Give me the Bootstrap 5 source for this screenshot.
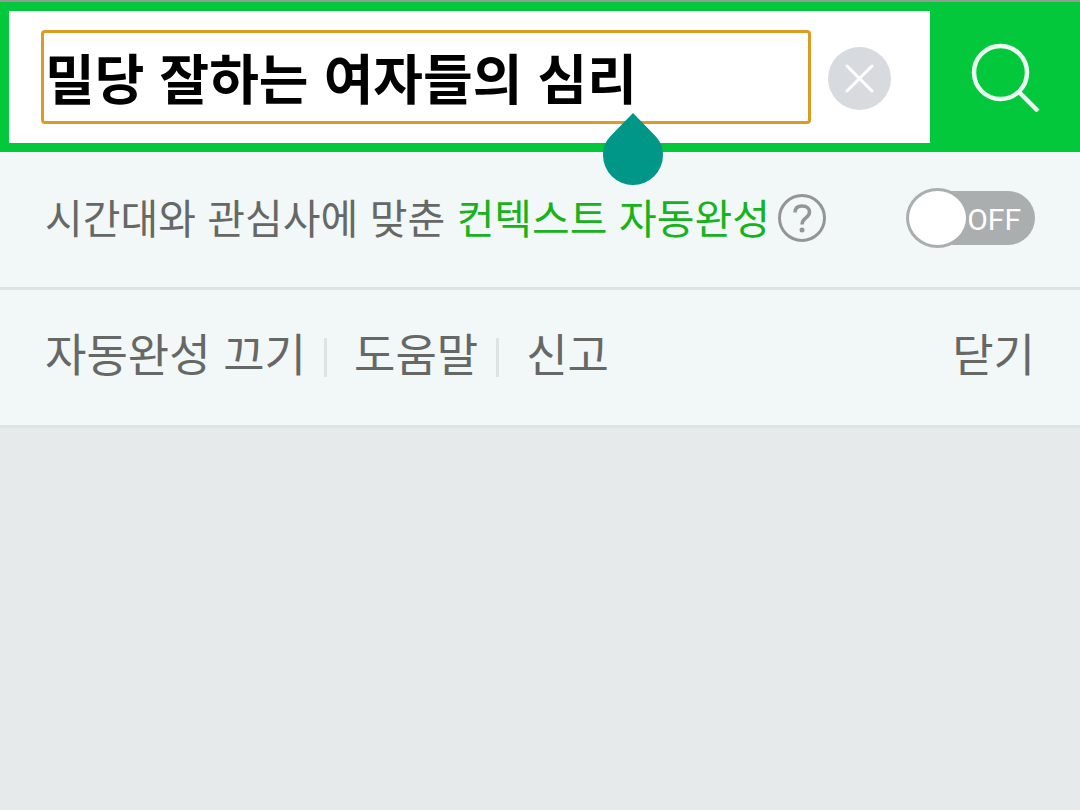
<!DOCTYPE html>
<html lang="ko">
<head>
<meta charset="utf-8">
<meta name="viewport" content="width=device-width, initial-scale=1">
<title>검색</title>
<link href="https://cdn.jsdelivr.net/npm/bootstrap@5.3.0/dist/css/bootstrap.min.css" rel="stylesheet">
<style>
  body { background: #e6eaea; color: #666866; font-family: "Noto Sans CJK KR", sans-serif; }
  .search-bar { background: #03c83c; border-top: 2px solid #949a94; }
  .search-form { padding: 9px 0 9px 9px; }
  .query-box { height: 132px; padding-left: 32px; padding-right: 39px; gap: 17px; }
  .query-input { height: 94px; padding: 0 0 2px 1px; border: 3px solid #dc9b22; border-radius: 4px; color: #000; font-size: 54px; font-weight: 700; line-height: 80px; outline: 0; }
  .caret-handle { left: 562px; top: 82px; pointer-events: none; }
  .clear-button { padding: 3px 0 0; }
  .search-button { width: 150px; }
  .panel-row { background: #f2f7f7; border-bottom: 3px solid #dfe3e4; min-height: 138px; padding: 0 45px 4px; }
  .context-text { font-size: 41px; line-height: 60px; padding-bottom: 4px; color: #666866; }
  .context-name { color: #16b31c; }
  .menu-link { font-size: 45px; line-height: 66px; padding-bottom: 6px; color: #666866; text-decoration: none; }
  .menu-divider { width: 3px; height: 39px; margin: 4px 27px 0 18px; background: #dfe3e4; }
  .toggle { width: 129px; height: 60px; }
  .toggle-input { appearance: none; width: 63px; height: 60px; margin: 0; border: 3px solid #abaeae; border-radius: 50%; background: #fff; z-index: 1; }
  .toggle-track { left: 20px; right: 0; top: 3px; bottom: 3px; border-radius: 27px; background: #abaeae; }
  .toggle-text { right: 14px; top: 15px; color: #fff; font: 30px/34px Roboto, sans-serif; }
</style>
</head>
<body>
<header class="search-bar">
  <form class="search-form d-flex">
    <div class="query-box d-flex align-items-center flex-grow-1 bg-white">
      <div class="position-relative flex-grow-1">
        <input class="query-input d-block w-100" type="text" aria-label="검색어" value="밀당 잘하는 여자들의 심리">
        <svg class="caret-handle position-absolute" width="60" height="74" viewBox="0 0 60 74" aria-hidden="true"><path fill="#009688" d="M30 1 8.800 22.800C3 28.500 0 35 0 43a30 30 0 0 0 60 0c0-8-3-14.500-8.800-20.200Z"/></svg>
      </div>
      <button class="clear-button border-0 bg-transparent flex-shrink-0" type="reset" aria-label="지우기">
        <svg class="d-block" width="63" height="63" viewBox="0 0 63 63" fill="none"><circle cx="31.500" cy="31.500" r="31.500" fill="#d7dade"/><path d="m19 19 25 25M44 19 19 44" stroke="#fff" stroke-width="3" stroke-linecap="round"/></svg>
      </button>
    </div>
    <button class="search-button border-0 bg-transparent p-0 flex-shrink-0" type="submit" aria-label="검색">
      <svg class="d-block mx-auto" width="70" height="70" viewBox="0 0 70 70" fill="none" stroke="#ecfff0" stroke-width="4.500"><circle cx="30.500" cy="30.500" r="26.500"/><path d="m49 50 19 19"/></svg>
    </button>
  </form>
</header>
<main>
  <section class="panel-row d-flex align-items-center justify-content-between">
    <div class="d-flex align-items-center gap-2">
      <label class="context-text text-nowrap" for="context">시간대와 관심사에 맞춘 <span class="context-name">컨텍스트 자동완성</span></label>
      <button class="border-0 bg-transparent p-0" type="button" aria-label="도움말">
        <svg class="d-block" width="48" height="48" viewBox="0 0 48 48" fill="none" stroke="#949696" stroke-width="3"><circle cx="24" cy="24" r="22.500"/><path d="M17 18.500c0-4.500 3-6.500 7.200-6.500 4.300 0 7.300 2.200 7.300 6 0 6.300-7.500 5.500-7.500 12.500" stroke-width="3.500"/><circle cx="24" cy="36" r="2.500" fill="#949696" stroke="none"/></svg>
      </button>
    </div>
    <div class="toggle position-relative flex-shrink-0">
      <div class="toggle-track position-absolute"></div>
      <input class="toggle-input position-relative d-block" type="checkbox" role="switch" id="context">
      <label class="toggle-text position-absolute" for="context">OFF</label>
    </div>
  </section>
  <nav class="panel-row d-flex align-items-center justify-content-between">
    <div class="d-flex align-items-center">
      <a class="menu-link" href="#">자동완성 끄기</a>
      <span class="menu-divider"></span>
      <a class="menu-link" href="#">도움말</a>
      <span class="menu-divider"></span>
      <a class="menu-link" href="#">신고</a>
    </div>
    <a class="menu-link" href="#">닫기</a>
  </nav>
</main>
<script src="https://cdn.jsdelivr.net/npm/bootstrap@5.3.0/dist/js/bootstrap.bundle.min.js"></script>
</body>
</html>
